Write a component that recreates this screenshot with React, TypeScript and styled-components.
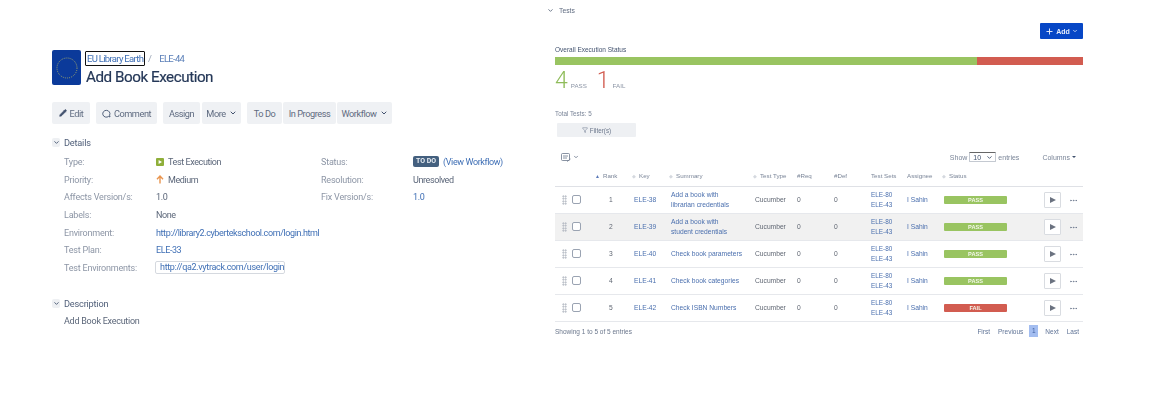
import styled, { createGlobalStyle } from 'styled-components';
import { ChevronDown, Filter, MoreHorizontal, Pencil, Plus } from 'lucide-react';

const GlobalStyle = createGlobalStyle`
  html, body { margin: 0; padding: 0; background: #fff; }
  body { font-family: "Liberation Sans", Arial, sans-serif; color: #172b4d; }
`;

const Page = styled.div`
  width: 1157px;
  height: 414px;
  display: flex;
  overflow: hidden;
  filter: blur(0.3px);
`;

/* left: issue view */
const IssuePanel = styled.section`
  width: 545px;
  flex: none;
  box-sizing: border-box;
  padding: 50px 0 0 52px;
  font-family: Roboto, "Liberation Sans", sans-serif;
`;

const IssueHeader = styled.header`
  display: flex;
  gap: 5px;
  height: 36px;
`;

const Avatar = styled.div`
  width: 29px;
  height: 35px;
  background: #0b3a9a;
  border-radius: 2px;
  display: flex;
  align-items: center;
  justify-content: center;
`;

const Crumbs = styled.div`
  display: flex;
  align-items: center;
  height: 16px;
  margin-left: -1px;
  font-size: 9.5px;
  letter-spacing: -0.7px;
  color: #5a7fb8;
`;

const FocusedLink = styled.span`
  border: 1px solid #111;
  border-radius: 1px;
  padding: 0 0 0 1px;
  height: 15px;
  line-height: 14px;
  width: 60px;
  white-space: nowrap;
  box-sizing: border-box;
  color: #3f6fb5;
`;

const Slash = styled.span`
  color: #9aa5b5;
  margin: 0 8px 0 3px;
`;

const Title = styled.h1`
  margin: 2px 0 0;
  font-size: 15.2px;
  line-height: 18px;
  font-weight: 400;
  letter-spacing: -0.45px;
  color: #253858;
  -webkit-text-stroke: 0.2px #253858;
`;

const Toolbar = styled.div`
  display: flex;
  margin-top: 16px;
  height: 22px;
`;

const ToolButton = styled.div<{ $w: number; $gap?: number }>`
  display: flex;
  align-items: center;
  justify-content: center;
  gap: 3px;
  width: ${(p) => p.$w}px;
  height: 22px;
  margin-right: ${(p) => p.$gap ?? 1}px;
  background: #eff1f4;
  border-radius: 2px;
  font-size: 9.2px;
  letter-spacing: -0.45px;
  color: #5f6b80;
  white-space: nowrap;
`;

const SectionHead = styled.div<{ $top: number }>`
  display: flex;
  align-items: center;
  gap: 4px;
  margin-top: ${(p) => p.$top}px;
  height: 12px;
  font-size: 9.2px;
  letter-spacing: -0.2px;
  color: #505f79;
`;

const Twisty = styled.span`
  width: 8px;
  height: 9px;
  border-radius: 2px;
  background: #eef0f3;
  display: flex;
  align-items: center;
  justify-content: center;
  color: #42526e;
`;

const Fields = styled.div`
  display: grid;
  grid-template-columns: 92px 165px 92px auto;
  grid-auto-rows: 17.7px;
  margin: 5px 0 0 12px;
  align-items: center;
  font-size: 9px;
  color: #5b6679;
`;

const Label = styled.span`
  letter-spacing: -0.2px;
  color: #8c95a5;
`;

const Value = styled.span<{ $link?: boolean; $wide?: boolean }>`
  display: flex;
  align-items: center;
  gap: 4px;
  white-space: nowrap;
  letter-spacing: -0.4px;
  grid-column: ${(p) => (p.$wide ? 'span 3' : 'auto')};
  color: ${(p) => (p.$link ? '#3f6fb5' : '#5b6679')};
`;

const Lozenge = styled.span`
  width: 26px;
  height: 11px;
  line-height: 11px;
  text-align: center;
  letter-spacing: 0;
  background: #44607f;
  color: #e8edf3;
  font-size: 7px;
  font-weight: 700;
  border-radius: 2px;
`;

const EnvBox = styled.span`
  border: 1px solid #d5d9df;
  border-radius: 2px;
  padding: 0 0 0 4px;
  height: 13px;
  line-height: 11px;
  width: 130px;
  margin-left: -1px;
  box-sizing: border-box;
  letter-spacing: -0.33px;
  color: #3f6fb5;
  white-space: nowrap;
`;

const DescriptionText = styled.p`
  margin: 6px 0 0 12px;
  font-size: 9px;
  letter-spacing: -0.25px;
  color: #5b6679;
`;

/* right: tests */
const TestsPanel = styled.section`
  width: 528px;
  flex: none;
  margin-left: 10px;
  padding-top: 5px;
`;

const TestsHead = styled.div`
  display: flex;
  align-items: center;
  gap: 5px;
  margin-left: -8px;
  height: 10px;
  font-size: 6.8px;
  color: #5f6b80;
`;

const AddRow = styled.div`
  display: flex;
  justify-content: flex-end;
  margin-top: 8px;
`;

const AddButton = styled.div`
  display: flex;
  align-items: center;
  justify-content: center;
  gap: 2px;
  width: 43px;
  height: 16px;
  background: #0747c6;
  border-radius: 1px;
  color: #e6edfb;
  font-size: 7px;
  font-weight: 700;
`;

const StatusTitle = styled.div`
  margin-top: 6px;
  height: 9px;
  line-height: 9px;
  font-size: 6.5px;
  color: #42526e;
`;

const ProgressBar = styled.div`
  display: flex;
  height: 8px;
  margin-top: 3px;
`;

const ProgressPart = styled.div<{ $grow: number; $fail?: boolean }>`
  flex: ${(p) => p.$grow};
  background: ${(p) => (p.$fail ? '#d25c50' : '#99c461')};
`;

const Counts = styled.div`
  display: flex;
  align-items: baseline;
  gap: 10px;
  height: 28px;
  margin-top: 2px;
`;

const Count = styled.div<{ $fail?: boolean }>`
  display: flex;
  align-items: baseline;
  gap: 3px;
  font-family: Roboto, "Liberation Sans", sans-serif;
  font-size: 23px;
  line-height: 28px;
  font-weight: 300;
  color: ${(p) => (p.$fail ? '#d25c50' : '#8fbc5a')};
  & small {
    font-family: "Liberation Sans", Arial, sans-serif;
    font-size: 6.2px;
    font-weight: 400;
    color: #8c95a5;
  }
`;

const TotalText = styled.div`
  margin-top: 14px;
  height: 10px;
  line-height: 10px;
  font-size: 6.3px;
  color: #7a8598;
`;

const FilterButton = styled.div`
  display: flex;
  align-items: center;
  justify-content: center;
  gap: 2px;
  width: 79px;
  height: 14px;
  margin: 4px 0 0 2px;
  background: #eef0f3;
  border-radius: 1px;
  font-size: 6.3px;
  color: #6b778c;
`;

const TableTools = styled.div`
  display: flex;
  align-items: center;
  height: 12px;
  margin-top: 14px;
  padding-left: 6px;
  font-size: 7px;
  color: #7a8598;
`;

const ExportIcon = styled.span`
  display: flex;
  align-items: center;
  gap: 2px;
  color: #5f6b80;
`;

const TableOptions = styled.div`
  margin-left: auto;
  display: flex;
  align-items: center;
  gap: 2px;
`;

const SelectBox = styled.span`
  display: flex;
  align-items: center;
  justify-content: space-between;
  width: 27px;
  height: 10px;
  box-sizing: border-box;
  padding: 0 2px 0 3px;
  border: 1px solid #c4c9d1;
  border-top-color: #666;
  border-radius: 1px;
  color: #42526e;
`;

const ColumnsMenu = styled.span`
  display: flex;
  align-items: center;
  gap: 2px;
  margin: 0 7px 0 21px;
`;

const Caret = styled.i`
  width: 0;
  height: 0;
  border-left: 2px solid transparent;
  border-right: 2px solid transparent;
  border-top: 2px solid #42526e;
`;

const cols = '16px 29px 34px 37px 84px 42px 37px 37px 36px 37px 100px 25px 14px';

const HeadRow = styled.div`
  display: grid;
  grid-template-columns: ${cols};
  align-items: center;
  height: 21px;
  margin-top: 2px;
  border-bottom: 1px solid #dfe1e6;
  font-size: 6.2px;
  color: #7a8598;
`;

const HeadCell = styled.span<{ $shift?: number }>`
  display: flex;
  align-items: center;
  gap: 3px;
  white-space: nowrap;
  margin-left: ${(p) => p.$shift ?? 0}px;
`;

const SortMark = styled.span<{ $active?: boolean }>`
  font-size: 5px;
  color: ${(p) => (p.$active ? '#5b79b8' : '#d5d9df')};
`;

const Row = styled.div<{ $shaded?: boolean }>`
  display: grid;
  grid-template-columns: ${cols};
  align-items: center;
  height: 26px;
  border-bottom: 1px solid #e6e8ec;
  background: ${(p) => (p.$shaded ? '#f1f1f1' : '#fff')};
  font-size: 6.7px;
  line-height: 10px;
  color: #5f6672;
`;

const Grip = styled.span`
  justify-self: center;
  width: 5px;
  height: 10px;
  margin-left: 2px;
  background-image: radial-gradient(#a9afba 0.8px, transparent 0.9px);
  background-size: 2.5px 2.5px;
`;

const Check = styled.span`
  width: 7px;
  height: 7px;
  margin: -2px 0 0 1px;
  border: 1px solid #9aa3b2;
  border-radius: 2px;
  background: #fff;
`;

const Rank = styled.span`
  padding-left: 9px;
`;

const Link = styled.span`
  display: block;
  color: #4a6fae;
  white-space: nowrap;
`;

const SetLinks = styled.span`
  font-size: 6.4px;
`;

const StatusPill = styled.span<{ $fail?: boolean }>`
  width: 63px;
  height: 8px;
  line-height: 8px;
  text-align: center;
  border-radius: 1px;
  background: ${(p) => (p.$fail ? '#d25c50' : '#99c461')};
  color: #f3f7ea;
  font-size: 5.6px;
  font-weight: 700;
`;

const PlayButton = styled.span`
  width: 17px;
  height: 16px;
  box-sizing: border-box;
  border: 1px solid #d9dce1;
  border-radius: 1px;
  background: #fff;
  display: flex;
  align-items: center;
  justify-content: center;
`;

const Triangle = styled.i`
  border-left: 6px solid #6b7280;
  border-top: 3px solid transparent;
  border-bottom: 3px solid transparent;
`;

const Dots = styled.span`
  display: flex;
  color: #6b778c;
`;

const Footer = styled.div`
  display: flex;
  align-items: center;
  justify-content: space-between;
  height: 12px;
  margin-top: 3px;
  font-size: 6.5px;
  color: #6b778c;
`;

const Pager = styled.div`
  display: flex;
  align-items: center;
  gap: 8px;
  padding-right: 4px;
  color: #5f7396;
`;

const PageNumber = styled.span`
  background: #a3bdf0;
  color: #3f5f9f;
  width: 9px;
  height: 12px;
  line-height: 12px;
  text-align: center;
  margin: 0 -1px 0 -2px;
`;

const tests = [
  { rank: 1, key: 'ELE-38', summary: ['Add a book with', 'librarian credentials'] },
  { rank: 2, key: 'ELE-39', summary: ['Add a book with', 'student credentials'] },
  { rank: 3, key: 'ELE-40', summary: ['Check book parameters'] },
  { rank: 4, key: 'ELE-41', summary: ['Check book categories'] },
  { rank: 5, key: 'ELE-42', summary: ['Check ISBN Numbers'], fail: true },
];

const headers = ['#Req', '#Def', 'Test Sets', 'Assignee'];

function Stars() {
  return (
    <svg width="24" height="24" viewBox="0 0 24 24">
      <circle cx="12" cy="12" r="10" fill="none" stroke="#a8ad6a" strokeWidth="0.9" strokeDasharray="1 1.1" />
    </svg>
  );
}

function TypeIcon() {
  return (
    <svg width="8" height="8" viewBox="0 0 8 8">
      <rect width="8" height="8" rx="1" fill="#8faf3a" />
      <path d="M2.6 1.9 L6 4 L2.6 6.1 Z" fill="#fff" />
    </svg>
  );
}

function PriorityIcon() {
  return (
    <svg width="8" height="9" viewBox="0 0 8 9">
      <path d="M4 8.5 V1.5 M1 4.2 L4 1 L7 4.2" fill="none" stroke="#e9954f" strokeWidth="1.4" />
    </svg>
  );
}

function CommentIcon() {
  return (
    <svg width="9" height="9" viewBox="0 0 9 9">
      <path d="M6.6 7.4 A3.6 3.4 0 1 1 7.6 6.2 L8 8 Z" fill="none" stroke="#42526e" strokeWidth="0.9" />
    </svg>
  );
}

function ExportGlyph() {
  return (
    <svg width="10" height="9" viewBox="0 0 10 9">
      <rect x="0.5" y="0.5" width="8" height="7" rx="1" fill="none" stroke="#6b778c" strokeWidth="0.8" />
      <path d="M2 3 H7 M2 5 H6" stroke="#6b778c" strokeWidth="0.8" />
      <path d="M6 8.5 L9.5 6" stroke="#6b778c" strokeWidth="0.8" />
    </svg>
  );
}

export default function App() {
  return (
    <Page>
      <GlobalStyle />
      <IssuePanel>
        <IssueHeader>
          <Avatar>
            <Stars />
          </Avatar>
          <div>
            <Crumbs>
              <FocusedLink>EU Library Earth</FocusedLink>
              <Slash>/</Slash>
              <span>ELE-44</span>
            </Crumbs>
            <Title>Add Book Execution</Title>
          </div>
        </IssueHeader>
        <Toolbar>
          <ToolButton $w={38} $gap={6}>
            <Pencil size={8} fill="#42526e" color="#42526e" />
            Edit
          </ToolButton>
          <ToolButton $w={61} $gap={6}>
            <CommentIcon />
            Comment
          </ToolButton>
          <ToolButton $w={37} $gap={2}>Assign</ToolButton>
          <ToolButton $w={39} $gap={6}>
            More
            <ChevronDown size={8} strokeWidth={3} color="#42526e" />
          </ToolButton>
          <ToolButton $w={35}>To Do</ToolButton>
          <ToolButton $w={53}>In Progress</ToolButton>
          <ToolButton $w={55}>
            Workflow
            <ChevronDown size={8} strokeWidth={3} color="#42526e" />
          </ToolButton>
        </Toolbar>
        <SectionHead $top={12}>
          <Twisty>
            <ChevronDown size={7} strokeWidth={3} />
          </Twisty>
          Details
        </SectionHead>
        <Fields>
          <Label>Type:</Label>
          <Value>
            <TypeIcon />
            Test Execution
          </Value>
          <Label>Status:</Label>
          <Value $link>
            <Lozenge>TO DO</Lozenge>
            (View Workflow)
          </Value>
          <Label>Priority:</Label>
          <Value>
            <PriorityIcon />
            Medium
          </Value>
          <Label>Resolution:</Label>
          <Value>Unresolved</Value>
          <Label>Affects Version/s:</Label>
          <Value>1.0</Value>
          <Label>Fix Version/s:</Label>
          <Value $link>1.0</Value>
          <Label>Labels:</Label>
          <Value $wide>None</Value>
          <Label>Environment:</Label>
          <Value $link $wide>
            http://library2.cybertekschool.com/login.html
          </Value>
          <Label>Test Plan:</Label>
          <Value $link $wide>
            ELE-33
          </Value>
          <Label>Test Environments:</Label>
          <Value $wide>
            <EnvBox>http://qa2.vytrack.com/user/login</EnvBox>
          </Value>
        </Fields>
        <SectionHead $top={21}>
          <Twisty>
            <ChevronDown size={7} strokeWidth={3} />
          </Twisty>
          Description
        </SectionHead>
        <DescriptionText>Add Book Execution</DescriptionText>
      </IssuePanel>

      <TestsPanel>
        <TestsHead>
          <ChevronDown size={7} strokeWidth={3} />
          Tests
        </TestsHead>
        <AddRow>
          <AddButton>
            <Plus size={9} strokeWidth={2.5} />
            Add
            <ChevronDown size={6} strokeWidth={3} />
          </AddButton>
        </AddRow>
        <StatusTitle>Overall Execution Status</StatusTitle>
        <ProgressBar>
          <ProgressPart $grow={4} />
          <ProgressPart $grow={1} $fail />
        </ProgressBar>
        <Counts>
          <Count>
            4<small>PASS</small>
          </Count>
          <Count $fail>
            1<small>FAIL</small>
          </Count>
        </Counts>
        <TotalText>Total Tests: 5</TotalText>
        <FilterButton>
          <Filter size={6} />
          Filter(s)
        </FilterButton>
        <TableTools>
          <ExportIcon>
            <ExportGlyph />
            <ChevronDown size={6} strokeWidth={3} />
          </ExportIcon>
          <TableOptions>
            Show
            <SelectBox>
              10
              <ChevronDown size={7} strokeWidth={3} />
            </SelectBox>
            entries
            <ColumnsMenu>
              Columns
              <Caret />
            </ColumnsMenu>
          </TableOptions>
        </TableTools>
        <HeadRow>
          <span />
          <span />
          <HeadCell $shift={-5}>
            <SortMark $active>▲</SortMark>
            Rank
          </HeadCell>
          <HeadCell $shift={-2}>
            <SortMark>◆</SortMark>
            Key
          </HeadCell>
          <HeadCell $shift={-2}>
            <SortMark>◆</SortMark>
            Summary
          </HeadCell>
          <HeadCell $shift={-2}>
            <SortMark>◆</SortMark>
            Test Type
          </HeadCell>
          {headers.map((h) => (
            <HeadCell key={h}>{h}</HeadCell>
          ))}
          <HeadCell $shift={-2}>
            <SortMark>◆</SortMark>
            Status
          </HeadCell>
        </HeadRow>
        {tests.map((t) => (
          <Row key={t.key} $shaded={t.rank === 2}>
            <Grip />
            <Check />
            <Rank>{t.rank}</Rank>
            <Link>{t.key}</Link>
            <span>
              {t.summary.map((line) => (
                <Link key={line}>{line}</Link>
              ))}
            </span>
            <span>Cucumber</span>
            <span>0</span>
            <span>0</span>
            <SetLinks>
              <Link>ELE-80</Link>
              <Link>ELE-43</Link>
            </SetLinks>
            <Link>I Sahin</Link>
            <StatusPill $fail={t.fail}>{t.fail ? 'FAIL' : 'PASS'}</StatusPill>
            <PlayButton>
              <Triangle />
            </PlayButton>
            <Dots>
              <MoreHorizontal size={9} />
            </Dots>
          </Row>
        ))}
        <Footer>
          Showing 1 to 5 of 5 entries
          <Pager>
            <span>First</span>
            <span>Previous</span>
            <PageNumber>1</PageNumber>
            <span>Next</span>
            <span>Last</span>
          </Pager>
        </Footer>
      </TestsPanel>
    </Page>
  );
}
